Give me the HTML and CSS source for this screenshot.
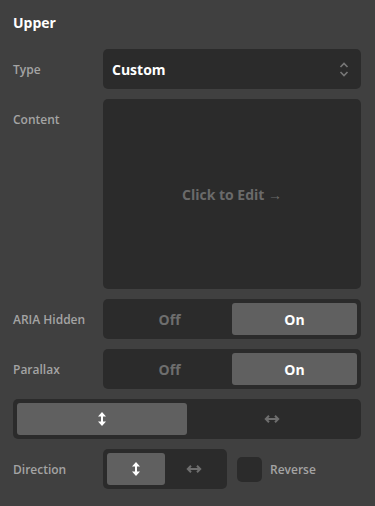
FILE: index.html
```html
<!DOCTYPE html>
<html lang="en">
<head>
    <meta charset="UTF-8">
    <title>Upper</title>
    <link rel="stylesheet" href="styles.css">
</head>
<body>
    <div class="panel">
        <h2 class="panel-title">Upper</h2>

        <div class="row">
            <div class="label">Type</div>
            <div class="select">
                <span>Custom</span>
                <svg class="select-icon" width="10" height="15" viewBox="0 0 10 15">
                    <path d="M1.5 5 L5 1.5 L8.5 5 M1.5 10 L5 13.5 L8.5 10" fill="none" stroke="currentColor" stroke-width="1.6"/>
                </svg>
            </div>
        </div>

        <div class="row">
            <div class="label">Content</div>
            <div class="content-box">Click to Edit →</div>
        </div>

        <div class="row">
            <div class="label">ARIA Hidden</div>
            <div class="segmented">
                <div class="segment">Off</div>
                <div class="segment active">On</div>
            </div>
        </div>

        <div class="row">
            <div class="label">Parallax</div>
            <div class="segmented">
                <div class="segment">Off</div>
                <div class="segment active">On</div>
            </div>
        </div>

        <div class="segmented full">
            <div class="segment active">
                <svg width="10" height="16" viewBox="0 0 10 16"><path d="M5 1 L9 5.5 H6 V10.5 H9 L5 15 L1 10.5 H4 V5.5 H1 Z" fill="currentColor"/></svg>
            </div>
            <div class="segment">
                <svg width="16" height="10" viewBox="0 0 16 10"><path d="M2 5 H14 M5 1.8 L1.8 5 L5 8.2 M11 1.8 L14.2 5 L11 8.2" fill="none" stroke="currentColor" stroke-width="2"/></svg>
            </div>
        </div>

        <div class="row">
            <div class="label">Direction</div>
            <div class="segmented small">
                <div class="segment active">
                    <svg width="10" height="16" viewBox="0 0 10 16"><path d="M5 1 L9 5.5 H6 V10.5 H9 L5 15 L1 10.5 H4 V5.5 H1 Z" fill="currentColor"/></svg>
                </div>
                <div class="segment">
                    <svg width="16" height="10" viewBox="0 0 16 10"><path d="M2 5 H14 M5 1.8 L1.8 5 L5 8.2 M11 1.8 L14.2 5 L11 8.2" fill="none" stroke="currentColor" stroke-width="2"/></svg>
                </div>
            </div>
            <label class="check">
                <span class="check-box"></span>
                <span>Reverse</span>
            </label>
        </div>
    </div>
</body>
</html>
```

FILE: styles.css
```css
* {
    margin: 0;
    padding: 0;
    box-sizing: border-box;
}

body {
    background: #404040;
    font-family: "Open Sans", "Noto Sans", sans-serif;
    color: #fff;
}

.panel {
    padding: 12px 14px 10px 13px;
    display: flex;
    flex-direction: column;
    gap: 10px;
}

.panel-title {
    font-size: 14px;
    font-weight: 700;
    line-height: 22px;
    height: 27px;
}

.row {
    display: flex;
    align-items: flex-start;
}

.label {
    width: 90px;
    flex-shrink: 0;
    height: 40px;
    display: flex;
    align-items: center;
    font-size: 12px;
    font-weight: 600;
    color: #a4a4a4;
}

.select {
    flex: 1;
    height: 40px;
    background: #2b2b2b;
    border-radius: 5px;
    display: flex;
    align-items: center;
    justify-content: space-between;
    padding: 0 12px 0 9px;
    font-size: 14px;
    font-weight: 700;
}

.select-icon {
    color: #777;
}

.content-box {
    flex: 1;
    height: 190px;
    background: #2b2b2b;
    border-radius: 5px;
    display: flex;
    align-items: center;
    justify-content: center;
    font-size: 14px;
    font-weight: 700;
    color: #6a6a6a;
}

.segmented {
    flex: 1;
    height: 40px;
    background: #2b2b2b;
    border-radius: 5px;
    padding: 4px;
    display: flex;
}

.segmented.full {
    flex: none;
}

.segmented.small {
    flex: none;
    width: 124px;
}

.segment {
    flex: 1;
    display: flex;
    align-items: center;
    justify-content: center;
    border-radius: 3px;
    font-size: 14px;
    font-weight: 700;
    color: #6e6e6e;
}

.segment.active {
    background: #606060;
    color: #fff;
}

.check {
    display: flex;
    align-items: center;
    gap: 8px;
    height: 40px;
    margin-left: 10px;
    font-size: 12px;
    font-weight: 600;
    color: #a4a4a4;
}

.check-box {
    width: 25px;
    height: 25px;
    border-radius: 5px;
    background: #2b2b2b;
}
```
